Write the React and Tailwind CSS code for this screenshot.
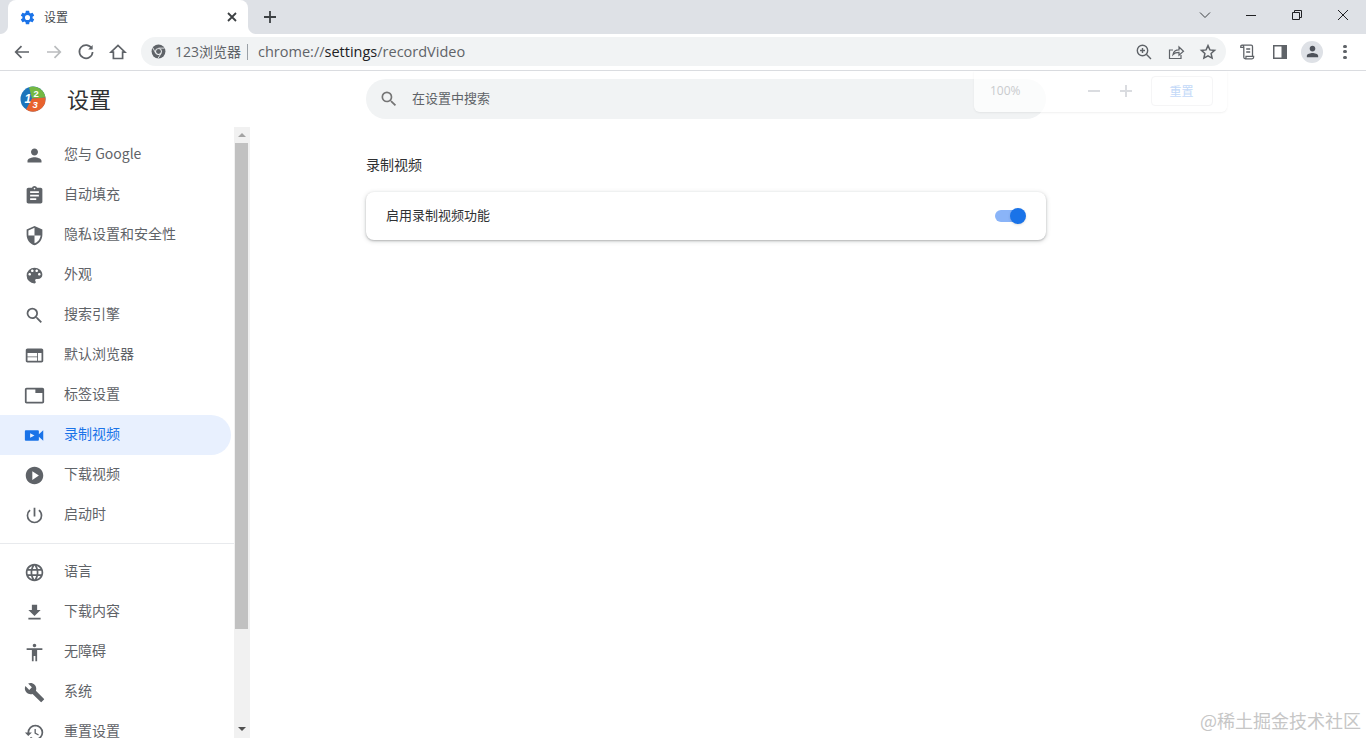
const FONT = "font-['Noto_Sans_CJK_SC','Noto_Sans',sans-serif]";

const P = {
  person: "M12 12c2.21 0 4-1.79 4-4s-1.79-4-4-4-4 1.79-4 4 1.79 4 4 4zm0 2c-2.67 0-8 1.34-8 4v2h16v-2c0-2.66-5.33-4-8-4z",
  assignment: "M19 3h-4.18C14.4 1.84 13.3 1 12 1c-1.3 0-2.4.84-2.82 2H5c-1.1 0-2 .9-2 2v14c0 1.1.9 2 2 2h14c1.1 0 2-.9 2-2V5c0-1.1-.9-2-2-2zm-7 0c.55 0 1 .45 1 1s-.45 1-1 1-1-.45-1-1 .45-1 1-1zm2 14H7v-2h7v2zm3-4H7v-2h10v2zm0-4H7V7h10v2z",
  security: "M12 1L3 5v6c0 5.55 3.84 10.74 9 12 5.16-1.26 9-6.45 9-12V5l-9-4zm0 10.99h7c-.53 4.12-3.28 7.79-7 8.94V12H5V6.3l7-3.11v8.8z",
  palette: "M12 3a9 9 0 0 0 0 18c.83 0 1.5-.67 1.5-1.5 0-.39-.15-.74-.39-1.01-.23-.26-.38-.61-.38-.99 0-.83.67-1.5 1.5-1.5H16c2.76 0 5-2.24 5-5 0-4.42-4.03-8-9-8zm-5.5 9c-.83 0-1.5-.67-1.5-1.5S5.67 9 6.5 9 8 9.67 8 10.5 7.33 12 6.5 12zm3-4C8.67 8 8 7.33 8 6.5S8.67 5 9.5 5s1.5.67 1.5 1.5S10.33 8 9.5 8zm5 0c-.83 0-1.5-.67-1.5-1.5S13.67 5 14.5 5s1.5.67 1.5 1.5S15.33 8 14.5 8zm3 4c-.83 0-1.5-.67-1.5-1.5S16.67 9 17.5 9s1.5.67 1.5 1.5-.67 1.5-1.5 1.5z",
  search: "M15.5 14h-.79l-.28-.27A6.471 6.471 0 0 0 16 9.5 6.5 6.5 0 1 0 9.5 16c1.61 0 3.09-.59 4.23-1.57l.27.28v.79l5 4.99L20.49 19l-4.99-5zm-6 0C7.01 14 5 11.99 5 9.5S7.01 5 9.5 5 14 7.01 14 9.5 11.99 14 9.5 14z",
  web: "M20 4H4c-1.1 0-1.99.9-1.99 2L2 18c0 1.1.9 2 2 2h16c1.1 0 2-.9 2-2V6c0-1.1-.9-2-2-2zm-5 14H4v-4h11v4zm0-5H4V9h11v4zm5 5h-4V9h4v9z",
  tab: "M21 3H3c-1.1 0-2 .9-2 2v14c0 1.1.9 2 2 2h18c1.1 0 2-.9 2-2V5c0-1.1-.9-2-2-2zm0 16H3V5h10v4h8v10z",
  video: "M17 10.5V7c0-.55-.45-1-1-1H2c-.55 0-1 .45-1 1v10c0 .55.45 1 1 1h14c.55 0 1-.45 1-1v-3.5l5 4.5V6l-5 4.5zM7 9.5l5 2.5-5 2.5v-5z",
  play: "M12 2C6.48 2 2 6.48 2 12s4.48 10 10 10 10-4.48 10-10S17.52 2 12 2zm-2.5 15V7l7.5 5-7.5 5z",
  power: "M13 3h-2v10h2V3zm4.83 2.17l-1.42 1.42A6.92 6.92 0 0 1 19 12c0 3.87-3.13 7-7 7A6.995 6.995 0 0 1 7.58 6.58L6.17 5.17A8.932 8.932 0 0 0 3 12a9 9 0 0 0 18 0c0-2.74-1.23-5.18-3.17-6.83z",
  language: "M11.99 2C6.47 2 2 6.48 2 12s4.47 10 9.99 10C17.52 22 22 17.52 22 12S17.52 2 11.99 2zm6.93 6h-2.95a15.65 15.65 0 0 0-1.38-3.56A8.03 8.03 0 0 1 18.92 8zM12 4.04c.83 1.2 1.48 2.53 1.91 3.96h-3.82c.43-1.43 1.08-2.76 1.91-3.96zM4.26 14C4.1 13.36 4 12.69 4 12s.1-1.36.26-2h3.38c-.08.66-.14 1.32-.14 2 0 .68.06 1.34.14 2H4.26zm.82 2h2.95c.32 1.25.78 2.45 1.38 3.56A7.987 7.987 0 0 1 5.08 16zm2.95-8H5.08a7.987 7.987 0 0 1 4.33-3.56A15.65 15.65 0 0 0 8.03 8zM12 19.96c-.83-1.2-1.48-2.53-1.91-3.96h3.82c-.43 1.43-1.08 2.76-1.91 3.96zM14.34 14H9.66c-.09-.66-.16-1.32-.16-2 0-.68.07-1.35.16-2h4.68c.09.65.16 1.32.16 2 0 .68-.07 1.34-.16 2zm.25 5.56c.6-1.11 1.06-2.31 1.38-3.56h2.95a8.03 8.03 0 0 1-4.33 3.56zM16.36 14c.08-.66.14-1.32.14-2 0-.68-.06-1.34-.14-2h3.38c.16.64.26 1.31.26 2s-.1 1.36-.26 2h-3.38z",
  download: "M19 9h-4V3H9v6H5l7 7 7-7zM5 18v2h14v-2H5z",
  accessibility: "M12 2c1.1 0 2 .9 2 2s-.9 2-2 2-2-.9-2-2 .9-2 2-2zm9 7h-6v13h-2v-6h-2v6H9V9H3V7h18v2z",
  build: "M22.7 19l-9.1-9.1c.9-2.3.4-5-1.5-6.9-2-2-5-2.4-7.4-1.3L9 6 6 9 1.6 4.7C.4 7.1.9 10.1 2.9 12.1c1.9 1.9 4.6 2.4 6.9 1.5l9.1 9.1c.4.4 1 .4 1.4 0l2.3-2.3c.5-.4.5-1.1.1-1.4z",
  restore: "M13 3a9 9 0 0 0-9 9H1l3.89 3.89.07.14L9 12H6c0-3.87 3.13-7 7-7s7 3.13 7 7-3.13 7-7 7c-1.93 0-3.68-.79-4.94-2.06l-1.42 1.42A8.954 8.954 0 0 0 13 21a9 9 0 0 0 0-18zm-1 5v5l4.28 2.54.72-1.21-3.5-2.08V8H12z",
  gear: "M19.14 12.94c.04-.3.06-.61.06-.94 0-.32-.02-.64-.07-.94l2.03-1.58a.49.49 0 0 0 .12-.61l-1.92-3.32a.488.488 0 0 0-.59-.22l-2.39.96c-.5-.38-1.03-.7-1.62-.94l-.36-2.54a.484.484 0 0 0-.48-.41h-3.84c-.24 0-.43.17-.47.41l-.36 2.54c-.59.24-1.13.57-1.62.94l-2.39-.96c-.22-.08-.47 0-.59.22L2.74 8.87c-.12.21-.08.47.12.61l2.03 1.58c-.05.3-.09.63-.09.94s.02.64.07.94l-2.03 1.58a.49.49 0 0 0-.12.61l1.92 3.32c.12.22.37.29.59.22l2.39-.96c.5.38 1.03.7 1.62.94l.36 2.54c.05.24.24.41.48.41h3.84c.24 0 .44-.17.47-.41l.36-2.54c.59-.24 1.13-.56 1.62-.94l2.39.96c.22.08.47 0 .59-.22l1.92-3.32c.12-.22.07-.47-.12-.61l-2.01-1.58zM12 15.6A3.6 3.6 0 1 1 12 8.4a3.6 3.6 0 0 1 0 7.2z",
};

const Icon = ({ d, className = "", size = 21 }) => (
  <svg viewBox="0 0 24 24" width={size} height={size} fill="currentColor" className={className}>
    <path d={d} />
  </svg>
);

const Stroke = ({ children, size = 20, vb = 20, color = "#5f6368", width = 1.7 }) => (
  <svg viewBox={`0 0 ${vb} ${vb}`} width={size} height={size} fill="none" stroke={color} strokeWidth={width}>
    {children}
  </svg>
);

const items1 = [
  ["person", "您与 Google"],
  ["assignment", "自动填充"],
  ["security", "隐私设置和安全性"],
  ["palette", "外观"],
  ["search", "搜索引擎"],
  ["web", "默认浏览器"],
  ["tab", "标签设置"],
  ["video", "录制视频", true],
  ["play", "下载视频"],
  ["power", "启动时"],
];
const items2 = [
  ["language", "语言"],
  ["download", "下载内容"],
  ["accessibility", "无障碍"],
  ["build", "系统"],
  ["restore", "重置设置"],
];

function NavItem({ icon, label, active }) {
  return (
    <div className={`flex h-10 w-[231px] shrink-0 items-center rounded-r-full pl-[24px] text-sm ${active ? "bg-[#e8f0fe] text-[#1a73e8]" : "text-[#5f6368]"}`}>
      <Icon d={P[icon]} />
      <span className="ml-[19px] pb-[4px]">{label}</span>
    </div>
  );
}

function Logo() {
  return (
    <svg viewBox="0 0 26 26" width="26" height="26">
      <circle cx="13" cy="13" r="12.5" fill="#1c74bb" />
      <path d="M9 1.2A12.5 12.5 0 0 1 25.4 11.5L12 12.5z" fill="#74b843" />
      <path d="M25.4 11.5A12.5 12.5 0 0 1 6 23.4L12 12.5z" fill="#e8622d" />
      <text x="4.5" y="17" fontSize="12" fontWeight="700" fontStyle="italic" fill="#fff" fontFamily="Liberation Sans">1</text>
      <text x="13.5" y="10.5" fontSize="9.5" fontWeight="700" fill="#fff" fontFamily="Liberation Sans">2</text>
      <text x="12.5" y="22" fontSize="9.5" fontWeight="700" fontStyle="italic" fill="#fff" fontFamily="Liberation Sans">3</text>
    </svg>
  );
}

export default function App() {
  return (
    <div className={`relative flex h-[738px] w-[1366px] flex-col overflow-hidden bg-white ${FONT}`}>
      {/* tab strip */}
      <div className="flex h-[34px] shrink-0 items-end bg-[#dee1e6]">
        <div className="relative ml-2 flex h-[34px] w-[240px] items-center rounded-t-lg bg-white pl-[11px] pr-[8px]">
          <span className="absolute bottom-0 left-[-8px] h-2 w-2 bg-[radial-gradient(circle_at_0_0,#dee1e6_7.5px,#ffffff_8.5px)]" />
          <span className="absolute bottom-0 right-[-8px] h-2 w-2 bg-[radial-gradient(circle_at_100%_0,#dee1e6_7.5px,#ffffff_8.5px)]" />
          <Icon d={P.gear} size={17} className="text-[#1a73e8]" />
          <span className="ml-2 text-xs text-[#45494d]">设置</span>
          <span className="ml-auto flex h-4 w-4 items-center justify-center">
            <Stroke size={12} vb={12} color="#3c4043" width={1.8}><path d="M2 2l8 8M10 2l-8 8" /></Stroke>
          </span>
        </div>
        <span className="ml-[14px] mb-[9px] flex h-4 w-4 items-center justify-center">
          <Stroke size={14} vb={14} color="#3c4043" width={1.8}><path d="M7 1v12M1 7h12" /></Stroke>
        </span>
        <div className="ml-auto flex h-full items-start">
          <span className="flex h-[29px] w-[46px] items-center justify-center">
            <Stroke size={12} vb={12} color="#3c4043" width={1}><path d="M1 3.5l5 5 5-5" /></Stroke>
          </span>
          <span className="flex h-[29px] w-[46px] items-center justify-center">
            <Stroke size={12} vb={12} color="#202124" width={1}><path d="M1 6.5h10" /></Stroke>
          </span>
          <span className="flex h-[29px] w-[46px] items-center justify-center">
            <Stroke size={12} vb={12} color="#202124" width={1}><path d="M1.5 3.5h7v7h-7zM3.5 3.5v-2h7v7h-2" /></Stroke>
          </span>
          <span className="flex h-[29px] w-[46px] items-center justify-center">
            <Stroke size={12} vb={12} color="#202124" width={1}><path d="M1 1l10 10M11 1L1 11" /></Stroke>
          </span>
        </div>
      </div>

      {/* toolbar */}
      <div className="flex h-[37px] shrink-0 items-center border-b border-[#dadce0] bg-white pl-[6px] pb-[1px]">
        <span className="flex w-8 justify-center">
          <Stroke size={18} vb={18}><path d="M16 9H3M8.5 3.2L2.7 9l5.8 5.8" /></Stroke>
        </span>
        <span className="flex w-8 justify-center">
          <Stroke size={18} vb={18} color="#babcbe"><path d="M2 9h13M9.5 3.2L15.3 9l-5.8 5.8" /></Stroke>
        </span>
        <span className="flex w-8 justify-center">
          <Stroke size={18} vb={18}><path d="M14.8 5.5A6.6 6.6 0 1 0 15.6 9" /><path d="M15.6 2v4.5h-4.5z" fill="#5f6368" stroke="none" /></Stroke>
        </span>
        <span className="flex w-8 justify-center">
          <Stroke size={18} vb={18}><path d="M2 9.2L9 2.4l7 6.8h-2.4v6.3H4.4V9.2z" /></Stroke>
        </span>
        <div className="ml-[7px] flex h-[29px] w-[1085px] items-center rounded-full bg-[#f1f3f4] pl-[10px] pr-[9px]">
          <svg viewBox="0 0 16 16" width="15" height="15" className="shrink-0">
            <circle cx="8" cy="8" r="7.4" fill="#5f6368" />
            <circle cx="8" cy="8" r="3.6" fill="#f1f3f4" />
            <circle cx="8" cy="8" r="2.6" fill="#5f6368" />
            <path d="M8 4.4h6.4M5 9.8L2 4.2M10.6 10.2L7.4 15.4" stroke="#f1f3f4" strokeWidth="0.9" fill="none" />
          </svg>
          <span className="ml-[9px] whitespace-nowrap font-['Open_Sans','Noto_Sans_CJK_SC',sans-serif] text-[14px] text-[#5f6368]">123浏览器</span>
          <span className="ml-[6px] h-4 w-px bg-[#9aa0a6]" />
          <span className="ml-[10px] whitespace-nowrap font-['Open_Sans',sans-serif] text-[14.5px] text-[#5f6368]">
            chrome://<span className="text-[#202124]">settings</span>/recordVideo
          </span>
          <span className="ml-auto flex items-center gap-[14px]">
            <Stroke size={18} vb={18} width={1.4}>
              <circle cx="7.5" cy="7.5" r="5.2" /><path d="M11.3 11.3L16 16M7.5 5v5M5 7.5h5" />
            </Stroke>
            <Stroke size={18} vb={18} width={1.2}>
              <path d="M6 7H2.5v8.5h11.5V12" /><path d="M6 11.5c.6-3 3-4.6 6-4.6V4l4.5 4.2L12 12.2V9.3c-2.6 0-4.6.6-6 2.2z" />
            </Stroke>
            <Stroke size={18} vb={18} width={1.5}>
              <path d="M9 2.6l1.9 4.3 4.7.5-3.5 3.1 1 4.6L9 12.8l-4.1 2.3 1-4.6-3.5-3.1 4.7-.5z" />
            </Stroke>
          </span>
        </div>
        <span className="ml-[13px] flex w-[18px] justify-center">
          <Stroke size={18} vb={18} width={1.3}>
            <path d="M3 2.2c1.2 0 1.8.7 1.8 1.8v10.3c0 .9.7 1.5 1.6 1.5H13c1 0 1.6-.6 1.6-1.5v-1H7v1c0 .9-.6 1.5-1 1.5M3 2.2h9.2c.9 0 1.3.6 1.3 1.4v9.7M3 2.2c-.7 0-1.2.5-1.2 1.2v1h3M7.2 6h4M7.2 9h4" />
          </Stroke>
        </span>
        <span className="ml-[14px] flex w-[18px] justify-center">
          <svg viewBox="0 0 14 14" width="14" height="14"><rect width="14" height="14" fill="#5f6368" /><rect x="1.5" y="1.5" width="7" height="11" fill="#fff" /></svg>
        </span>
        <span className="ml-[12px] flex h-[22px] w-[22px] items-center justify-center rounded-full bg-[#dee1e6] text-[#4e525a]">
          <Icon d={P.person} size={17} />
        </span>
        <span className="ml-[20px] flex h-[14px] w-[4px] flex-col justify-between">
          <span className="h-[3px] w-[3.5px] rounded-full bg-[#5f6368]" />
          <span className="h-[3px] w-[3.5px] rounded-full bg-[#5f6368]" />
          <span className="h-[3px] w-[3.5px] rounded-full bg-[#5f6368]" />
        </span>
      </div>

      {/* page */}
      <div className="flex min-h-0 flex-1">
        <aside className="flex w-[250px] shrink-0 flex-col">
          <div className="flex h-[56px] shrink-0 items-center pl-[20px]">
            <Logo />
            <span className="ml-[21px] pb-[2px] text-[22px] text-[#2f3133]">设置</span>
          </div>
          <div className="flex min-h-0 flex-1">
            <nav className="flex w-[234px] flex-col overflow-hidden pt-2">
              {items1.map(([i, l, a]) => <NavItem key={l} icon={i} label={l} active={a} />)}
              <div className="my-2 h-px w-[234px] shrink-0 bg-[#e8eaed]" />
              {items2.map(([i, l]) => <NavItem key={l} icon={i} label={l} />)}
            </nav>
            <div className="flex w-4 flex-col items-start bg-[#f1f1f1] pl-px">
              <div className="flex h-4 w-[13px] shrink-0 items-center justify-center">
                <span className="border-x-[4px] border-b-[4px] border-x-transparent border-b-[#a3a3a3]" />
              </div>
              <div className="h-[486px] w-[13px] shrink-0 bg-[#c1c1c1]" />
              <div className="mt-auto flex h-[19px] w-[13px] shrink-0 items-center justify-center">
                <span className="border-x-[4px] border-t-[4px] border-x-transparent border-t-[#505050]" />
              </div>
            </div>
          </div>
        </aside>

        <main className="flex-1 pl-[116px] pt-2">
          <div className="flex h-10 w-[680px] items-center rounded-full bg-[#f1f3f4] pl-[13px] text-[13px] text-[#5f6368]">
            <Icon d={P.search} size={20} className="text-[#757575]" />
            <span className="ml-[13px] pb-[2px]">在设置中搜索</span>
          </div>
          <h2 className="mt-[34px] text-sm font-normal leading-[22px] text-[#2f3133]">录制视频</h2>
          <div className="mt-[17px] flex h-12 w-[680px] items-center justify-between rounded-lg bg-white pl-5 pr-[21px] text-[13px] text-[#2f3133] shadow-[0_1px_2px_rgba(60,64,67,0.3),0_1px_4px_1px_rgba(60,64,67,0.15)]">
            <span className="pb-[2px]">启用录制视频功能</span>
            <span className="relative flex h-3 w-[30px] items-center rounded-full bg-[#8ab4f8]">
              <span className="absolute right-[-1px] h-4 w-4 rounded-full bg-[#1a73e8] shadow-sm" />
            </span>
          </div>
        </main>
      </div>

      {/* fading zoom bubble */}
      <div className="absolute left-[974px] top-[71px] flex h-[41px] w-[253px] items-center rounded-b-md bg-white/70 pb-[2px] pl-4 shadow-[0_1px_2px_rgba(60,64,67,0.08)]">
        <span className="font-['Open_Sans',sans-serif] text-xs text-[#c9cbce]">100%</span>
        <span className="ml-[67px] h-[2px] w-3 bg-[#dadce0]" />
        <span className="relative ml-[20px] flex h-3 w-3 items-center justify-center">
          <span className="h-[2px] w-3 bg-[#dadce0]" />
          <span className="absolute h-3 w-[2px] bg-[#dadce0]" />
        </span>
        <span className="ml-[19px] flex h-[30px] w-[62px] items-center justify-center rounded border border-[#f5f5f6] text-xs text-[#c3d9f8]">重置</span>
      </div>

      {/* watermark */}
      <span className="absolute bottom-[7px] right-[5px] text-[18px] leading-[22px] text-[#c6c6c6]">@稀土掘金技术社区</span>
    </div>
  );
}
